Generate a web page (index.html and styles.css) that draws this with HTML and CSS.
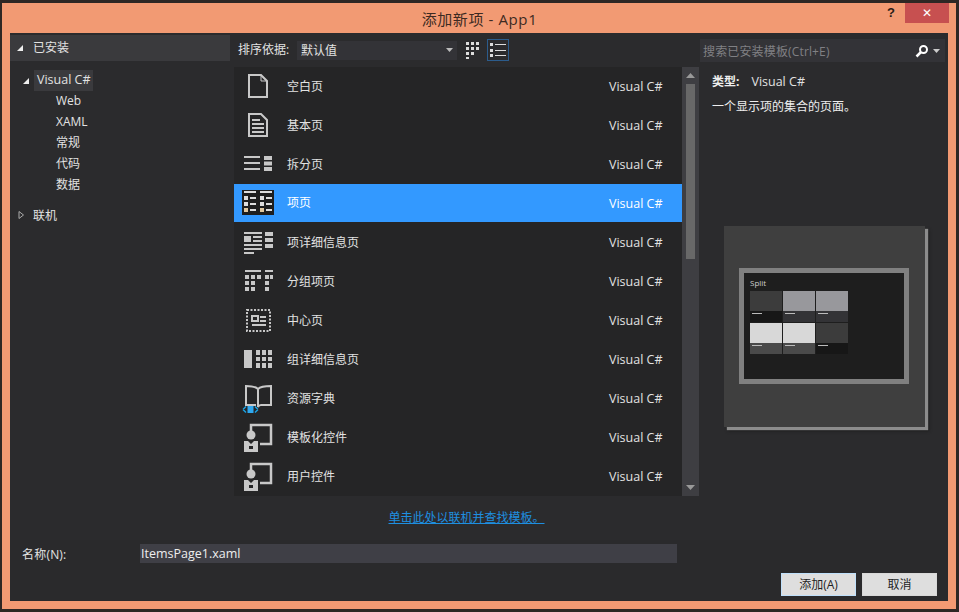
FILE: index.html
```html
<!DOCTYPE html>
<html lang="zh-CN">
<head>
  <meta charset="UTF-8" />
  <title>添加新项 - App1</title>
  <link rel="stylesheet" href="styles.css">
</head>
<body>
  <div class="window">
    <div class="titlebar">
      <div class="title">添加新项 - App1</div>
      <div class="help">?</div>
      <div class="close">✕</div>
    </div>

    <div class="main">
      <div class="sidebar">
        <div class="side-head">
          <svg class="twisty" width="8" height="8" viewBox="0 0 8 8"><path d="M7 1V7H1Z" fill="#eee"/></svg>
          <span class="side-title">已安装</span>
        </div>
        <div class="tree">
          <div class="tree-root">
            <svg class="twisty" width="8" height="8" viewBox="0 0 8 8"><path d="M7 1V7H1Z" fill="#eee"/></svg>
            <span class="tree-current">Visual C#</span>
          </div>
          <div class="tree-child">Web</div>
          <div class="tree-child">XAML</div>
          <div class="tree-child">常规</div>
          <div class="tree-child">代码</div>
          <div class="tree-child">数据</div>
          <div class="tree-online">
            <svg class="twisty" width="8" height="10" viewBox="0 0 8 10"><path d="M2 1.5L6.5 5L2 8.5Z" fill="none" stroke="#aaa"/></svg>
            <span>联机</span>
          </div>
        </div>
      </div>

      <div class="center">
        <div class="toolbar">
          <span class="sort-label">排序依据:</span>
          <div class="select">
            <span>默认值</span>
            <svg width="7" height="4" viewBox="0 0 7 4"><path d="M0 0H7L3.5 4Z" fill="#bbb"/></svg>
          </div>
          <button class="view-btn">
            <svg width="16" height="18" viewBox="0 0 16 18" fill="#ddd">
              <rect x="1" y="1" width="3" height="3"/><rect x="6" y="1" width="3" height="3"/><rect x="11" y="1" width="3" height="3"/>
              <rect x="1" y="6" width="3" height="3"/><rect x="6" y="6" width="3" height="3"/><rect x="11" y="6" width="3" height="3"/>
              <rect x="1" y="11" width="3" height="3"/><rect x="6" y="11" width="3" height="3"/><rect x="1" y="16" width="3" height="2"/>
            </svg>
          </button>
          <button class="view-btn view-btn-on">
            <svg width="16" height="16" viewBox="0 0 16 16" fill="#ddd">
              <rect x="0" y="1" width="3" height="3"/><rect x="5" y="2" width="11" height="1"/>
              <rect x="0" y="7" width="3" height="3"/><rect x="5" y="8" width="11" height="1"/>
              <rect x="0" y="12" width="3" height="3"/><rect x="5" y="13" width="11" height="1"/>
            </svg>
          </button>
        </div>

        <div class="list-wrap">
          <div class="list">
            <div class="item">
              <svg class="icon" width="36" height="39" viewBox="0 0 36 39"><path d="M9 8H21L27 14V30H9Z" fill="none" stroke="#c8c8c8" stroke-width="2"/><path d="M21 8V14H27" fill="none" stroke="#c8c8c8" stroke-width="1"/></svg>
              <span class="item-name">空白页</span><span class="item-lang">Visual C#</span>
            </div>
            <div class="item">
              <svg class="icon" width="36" height="39" viewBox="0 0 36 39"><path d="M9 8H21L27 14V30H9Z" fill="none" stroke="#c8c8c8" stroke-width="2"/><path d="M12 14H20M12 18H24M12 22H24M12 26H24" stroke="#c8c8c8" stroke-width="2"/></svg>
              <span class="item-name">基本页</span><span class="item-lang">Visual C#</span>
            </div>
            <div class="item">
              <svg class="icon" width="36" height="39" viewBox="0 0 36 39" fill="#c8c8c8"><rect x="4" y="11" width="16" height="2"/><rect x="4" y="17" width="16" height="2"/><rect x="4" y="23" width="16" height="2"/><rect x="24" y="11" width="8" height="4"/><rect x="24" y="16.5" width="8" height="4"/><rect x="24" y="22" width="8" height="4"/></svg>
              <span class="item-name">拆分页</span><span class="item-lang">Visual C#</span>
            </div>
            <div class="item item-selected">
              <svg class="icon" width="36" height="39" viewBox="0 0 36 39">
                <rect x="2" y="6" width="32" height="25" fill="#1e1e1e"/>
                <path d="M4 8H16M20 8H32" stroke="#ddd" stroke-width="2"/>
                <g fill="#ddd"><rect x="4" y="12" width="4" height="4"/><rect x="20" y="12" width="4" height="4"/><rect x="4" y="18" width="4" height="4"/><rect x="20" y="18" width="4" height="4"/></g>
                <g fill="#e0c8a0"><rect x="4" y="24" width="4" height="4"/><rect x="20" y="24" width="4" height="4"/></g>
                <path d="M10 14H16M26 14H32M10 20H16M26 20H32M10 26H16M26 26H32" stroke="#ddd" stroke-width="2"/>
              </svg>
              <span class="item-name">项页</span><span class="item-lang">Visual C#</span>
            </div>
            <div class="item">
              <svg class="icon" width="36" height="39" viewBox="0 0 36 39" fill="#c8c8c8"><rect x="4" y="9" width="18" height="2"/><rect x="4" y="13" width="7" height="6"/><rect x="13" y="13" width="9" height="2"/><rect x="13" y="17" width="9" height="2"/><rect x="4" y="21" width="18" height="2"/><rect x="4" y="25" width="18" height="2"/><rect x="4" y="29" width="10" height="2"/><rect x="25" y="9" width="8" height="4"/><rect x="25" y="15" width="8" height="4"/><rect x="25" y="21" width="8" height="4"/></svg>
              <span class="item-name">项详细信息页</span><span class="item-lang">Visual C#</span>
            </div>
            <div class="item">
              <svg class="icon" width="36" height="39" viewBox="0 0 36 39" fill="#c8c8c8"><rect x="5" y="8" width="16" height="2"/><rect x="25" y="8" width="8" height="2"/><rect x="5" y="13" width="4" height="4"/><rect x="11" y="13" width="4" height="4"/><rect x="17" y="13" width="4" height="4"/><rect x="25" y="13" width="4" height="4"/><rect x="30" y="13" width="3" height="4"/><rect x="5" y="19" width="4" height="4"/><rect x="11" y="19" width="4" height="4"/><rect x="25" y="19" width="4" height="4"/><rect x="5" y="25" width="4" height="4"/><rect x="11" y="25" width="4" height="4"/><rect x="25" y="25" width="4" height="4"/></svg>
              <span class="item-name">分组项页</span><span class="item-lang">Visual C#</span>
            </div>
            <div class="item">
              <svg class="icon" width="36" height="39" viewBox="0 0 36 39"><rect x="7" y="9" width="23" height="21" fill="none" stroke="#c8c8c8" stroke-width="2" stroke-dasharray="2 1.5"/><rect x="12" y="15" width="6" height="5" fill="none" stroke="#c8c8c8" stroke-width="2"/><path d="M20 16H26M20 20H26M12 24H26" stroke="#c8c8c8" stroke-width="2"/></svg>
              <span class="item-name">中心页</span><span class="item-lang">Visual C#</span>
            </div>
            <div class="item">
              <svg class="icon" width="36" height="39" viewBox="0 0 36 39" fill="#c8c8c8"><rect x="4" y="10" width="8" height="18"/><rect x="16" y="10" width="4" height="5"/><rect x="22" y="10" width="4" height="5"/><rect x="28" y="10" width="4" height="5"/><rect x="16" y="17" width="4" height="4"/><rect x="22" y="17" width="4" height="4"/><rect x="28" y="17" width="4" height="4"/><rect x="16" y="23" width="4" height="5"/><rect x="22" y="23" width="4" height="5"/><rect x="28" y="23" width="4" height="5"/></svg>
              <span class="item-name">组详细信息页</span><span class="item-lang">Visual C#</span>
            </div>
            <div class="item">
              <svg class="icon" width="36" height="39" viewBox="0 0 36 39"><path d="M18 10C16 8 12 7 6 7V26H16M18 10C20 8 25 7 31 7V26H21C19 26 18 28 18 28V10Z" fill="none" stroke="#c8c8c8" stroke-width="2"/><path d="M3 30.500L6 27.500M3 30.500L6 33.500M18 30.500L15 27.500M18 30.500L15 33.500" stroke="#1ba1e2" stroke-width="1.500"/><rect x="7.500" y="27" width="6" height="7" fill="#2fa8ef"/></svg>
              <span class="item-name">资源字典</span><span class="item-lang">Visual C#</span>
            </div>
            <div class="item">
              <svg class="icon" width="36" height="39" viewBox="0 0 36 39"><path d="M11 13V7H31V26H20" fill="none" stroke="#c8c8c8" stroke-width="2.500"/><circle cx="11" cy="17" r="4.500" fill="#c8c8c8"/><path d="M4 23H8L11 26L14 23H18V34H4Z" fill="#c8c8c8"/><rect x="9" y="28" width="4" height="3" fill="#252526"/></svg>
              <span class="item-name">模板化控件</span><span class="item-lang">Visual C#</span>
            </div>
            <div class="item">
              <svg class="icon" width="36" height="39" viewBox="0 0 36 39"><path d="M11 13V7H31V26H20" fill="none" stroke="#c8c8c8" stroke-width="2.500"/><circle cx="11" cy="17" r="4.500" fill="#c8c8c8"/><path d="M4 23H8L11 26L14 23H18V34H4Z" fill="#c8c8c8"/><rect x="9" y="28" width="4" height="3" fill="#252526"/></svg>
              <span class="item-name">用户控件</span><span class="item-lang">Visual C#</span>
            </div>
          </div>
          <div class="scrollbar">
            <svg width="9" height="5" viewBox="0 0 9 5"><path d="M0 5H9L4.500 0Z" fill="#999"/></svg>
            <div class="thumb"></div>
            <svg class="scroll-down" width="9" height="5" viewBox="0 0 9 5"><path d="M0 0H9L4.500 5Z" fill="#999"/></svg>
          </div>
        </div>

        <div class="online-link"><a href="#">单击此处以联机并查找模板。</a></div>
      </div>

      <div class="details">
        <div class="search">
          <span class="search-text">搜索已安装模板(Ctrl+E)</span>
          <svg width="14" height="14" viewBox="0 0 14 14"><circle cx="8.500" cy="5.500" r="3.500" fill="none" stroke="#fff" stroke-width="2"/><path d="M6 8L1.500 12.500" stroke="#fff" stroke-width="2.500"/></svg>
          <svg class="search-caret" width="7" height="4" viewBox="0 0 7 4"><path d="M0 0H7L3.500 4Z" fill="#ccc"/></svg>
        </div>
        <div class="type-row"><b>类型:</b><span class="type-value">Visual C#</span></div>
        <div class="desc">一个显示项的集合的页面。</div>
        <div class="preview">
          <div class="screen">
            <div class="screen-title">Split</div>
            <div class="tiles">
              <div class="tile"><div class="tile-img dark"></div><div class="tile-cap cap-black"><i></i></div></div>
              <div class="tile"><div class="tile-img mid"></div><div class="tile-cap cap-grey"><i></i></div></div>
              <div class="tile"><div class="tile-img mid"></div><div class="tile-cap cap-grey"><i></i></div></div>
              <div class="tile"><div class="tile-img light"></div><div class="tile-cap cap-soft"><i></i></div></div>
              <div class="tile"><div class="tile-img light"></div><div class="tile-cap cap-soft"><i></i></div></div>
              <div class="tile"><div class="tile-img dark"></div><div class="tile-cap cap-black"><i></i></div></div>
            </div>
          </div>
        </div>
      </div>
    </div>

    <div class="footer">
      <div class="name-row">
        <label class="name-label">名称(N):</label>
        <div class="name-input">ItemsPage1.xaml</div>
      </div>
      <div class="actions">
        <button class="btn btn-default">添加(A)</button>
        <button class="btn">取消</button>
      </div>
    </div>
  </div>
</body>
</html>
```

FILE: styles.css
```css
html, body {
  margin: 0;
  height: 100%;
}

body {
  background: #2e2724;
  font-family: "Open Sans", "Noto Sans CJK SC", sans-serif;
  font-size: 12px;
  color: #e2e2e2;
  overflow: hidden;
}

.window {
  box-sizing: border-box;
  width: 954px;
  height: 606px;
  margin: 3px 0 0 2px;
  padding: 0 8px 8px;
  background: #f29a73;
  display: flex;
  flex-direction: column;
}

.titlebar {
  height: 30px;
  flex: none;
  display: flex;
  align-items: flex-start;
  justify-content: flex-end;
  position: relative;
  margin-right: -1px;
}

.title {
  position: absolute;
  left: 0;
  right: 0;
  top: 6px;
  text-align: center;
  font-size: 15px;
  letter-spacing: 0.6px;
  line-height: 20px;
  color: #3d2a22;
}

.help {
  width: 28px;
  text-align: center;
  font: bold 13px/20px "Liberation Sans", sans-serif;
  color: #2a1c16;
}

.close {
  width: 44px;
  height: 20px;
  background: #c75050;
  color: #fff;
  text-align: center;
  font: bold 12px/20px "DejaVu Sans", sans-serif;
}

.main {
  flex: 1;
  min-height: 0;
  display: flex;
  background: #2b2b2d;
}

/* left tree */
.sidebar {
  width: 220px;
  flex: none;
  padding-top: 2px;
}

.side-head {
  height: 26px;
  background: #3a3a3d;
  display: flex;
  align-items: center;
  padding-left: 6px;
  gap: 9px;
}

.side-title {
  margin-bottom: 2px;
}

.twisty {
  flex: none;
}

.tree {
  padding-top: 9px;
}

.tree-root {
  display: flex;
  align-items: center;
  height: 21px;
  padding-left: 12px;
  gap: 4px;
}

.tree-current {
  box-sizing: border-box;
  background: #3a3a3d;
  padding: 0 3px 2px;
  line-height: 19px;
  width: 59px;
  font-size: 12.5px;
  white-space: nowrap;
}

.tree-child {
  height: 21px;
  line-height: 19px;
  padding-left: 46px;
}

.tree-online {
  display: flex;
  align-items: center;
  height: 21px;
  margin-top: 8px;
  padding-left: 7px;
  gap: 8px;
}

/* center */
.center {
  width: 469px;
  flex: none;
  display: flex;
  flex-direction: column;
}

.toolbar {
  height: 34px;
  flex: none;
  display: flex;
  align-items: center;
  padding-left: 8px;
}

.sort-label {
  width: 59px;
  margin-bottom: 2px;
}

.select {
  box-sizing: border-box;
  width: 160px;
  height: 19px;
  background: #333337;
  display: flex;
  align-items: center;
  justify-content: space-between;
  padding: 0 4px;
  margin-right: 5px;
}

.view-btn {
  box-sizing: border-box;
  width: 22px;
  height: 22px;
  padding: 0;
  border: 1px solid transparent;
  background: none;
  display: flex;
  align-items: center;
  justify-content: center;
}

.view-btn-on {
  border-color: #2c5c8c;
  margin-left: 3px;
}

.list-wrap {
  height: 429px;
  flex: none;
  display: flex;
  padding-left: 4px;
}

.list {
  width: 448px;
  background: #252526;
}

.item {
  height: 39px;
  display: flex;
  align-items: center;
  padding-left: 6px;
}

.item-selected {
  height: 38px;
  margin-bottom: 1px;
  background: #3399ff;
  color: #fff;
}

.icon {
  flex: none;
}

.item-name {
  margin: 0 0 2px 11px;
  width: 322px;
}

.item-lang {
  font-size: 12.5px;
}

.scrollbar {
  width: 17px;
  background: #3e3e42;
  display: flex;
  flex-direction: column;
  align-items: center;
  padding-top: 6px;
  box-sizing: border-box;
}

.thumb {
  width: 9px;
  height: 175px;
  margin-top: 6px;
  background: #686868;
}

.scroll-down {
  margin-top: auto;
  margin-bottom: 6px;
}

.online-link {
  flex: 1;
  display: flex;
  align-items: center;
  justify-content: center;
  padding: 0 0 2px 4px;
}

.online-link a {
  color: #1e8fe0;
}

/* right details */
.details {
  flex: 1;
  padding-top: 6px;
}

.search {
  box-sizing: border-box;
  width: 245px;
  height: 23px;
  margin-left: 1px;
  background: #333337;
  display: flex;
  align-items: center;
  padding: 0 4px 0 3px;
  color: #808084;
}

.search-text {
  flex: 1;
  letter-spacing: 0.15px;
}

.search-caret {
  margin-left: 4px;
  margin-right: 1px;
}

.type-row {
  margin: 10px 0 0 13px;
  line-height: 20px;
}

.type-row b {
  font-weight: 700;
  color: #eee;
  margin-right: 12px;
}

.type-value {
  font-size: 12.5px;
}

.desc {
  margin: 5px 0 0 13px;
  line-height: 20px;
  color: #eee;
}

.preview {
  box-sizing: border-box;
  width: 201px;
  height: 201px;
  margin: 109px 0 0 25px;
  background: #3f3f3f;
  box-shadow: 3px 3px 1px #8c8c8c, 4px 4px 3px #1e1e1e;
  padding: 42px 15px 0;
}

.screen {
  box-sizing: border-box;
  width: 170px;
  height: 116px;
  border: 5px solid #808080;
  background: #1e1e1e;
  padding: 5px 6px;
}

.screen-title {
  font-size: 8px;
  line-height: 9px;
  color: #ccc;
  height: 13px;
}

.tiles {
  display: grid;
  grid-template-columns: repeat(3, 32px);
  column-gap: 1px;
  row-gap: 1px;
}

.tile-img {
  height: 20px;
}

.tile-cap {
  height: 11px;
  padding: 2px 2px 0;
  box-sizing: border-box;
}

.tile-cap i {
  display: block;
  width: 10px;
  height: 1px;
  background: #bbb;
}

.dark { background: #3c3c3c; }
.mid { background: #98989c; }
.light { background: #d8d8d8; }
.cap-black { background: #171717; }
.cap-grey { background: #333336; }
.cap-soft { background: #4a4a4a; }

/* footer */
.footer {
  height: 61px;
  flex: none;
  background: #2a2a2c;
  box-sizing: border-box;
  padding-top: 4px;
}

.name-row {
  display: flex;
  align-items: center;
  height: 19px;
  padding-left: 12px;
}

.name-label {
  width: 118px;
  letter-spacing: 0.2px;
}

.name-input {
  box-sizing: border-box;
  width: 537px;
  height: 19px;
  line-height: 19px;
  background: #3f3f46;
  padding-left: 1px;
  font-size: 12.5px;
  color: #eee;
}

.actions {
  display: flex;
  justify-content: flex-end;
  gap: 6px;
  padding: 10px 11px 0 0;
}

.btn {
  box-sizing: border-box;
  width: 75px;
  height: 23px;
  border: 1px solid #d8d8d8;
  background: #dedede;
  color: #1e1e1e;
  font-family: inherit;
  font-size: 12px;
  padding: 0 0 2px;
}

.btn-default {
  border-color: #bfe0fb;
}
```
